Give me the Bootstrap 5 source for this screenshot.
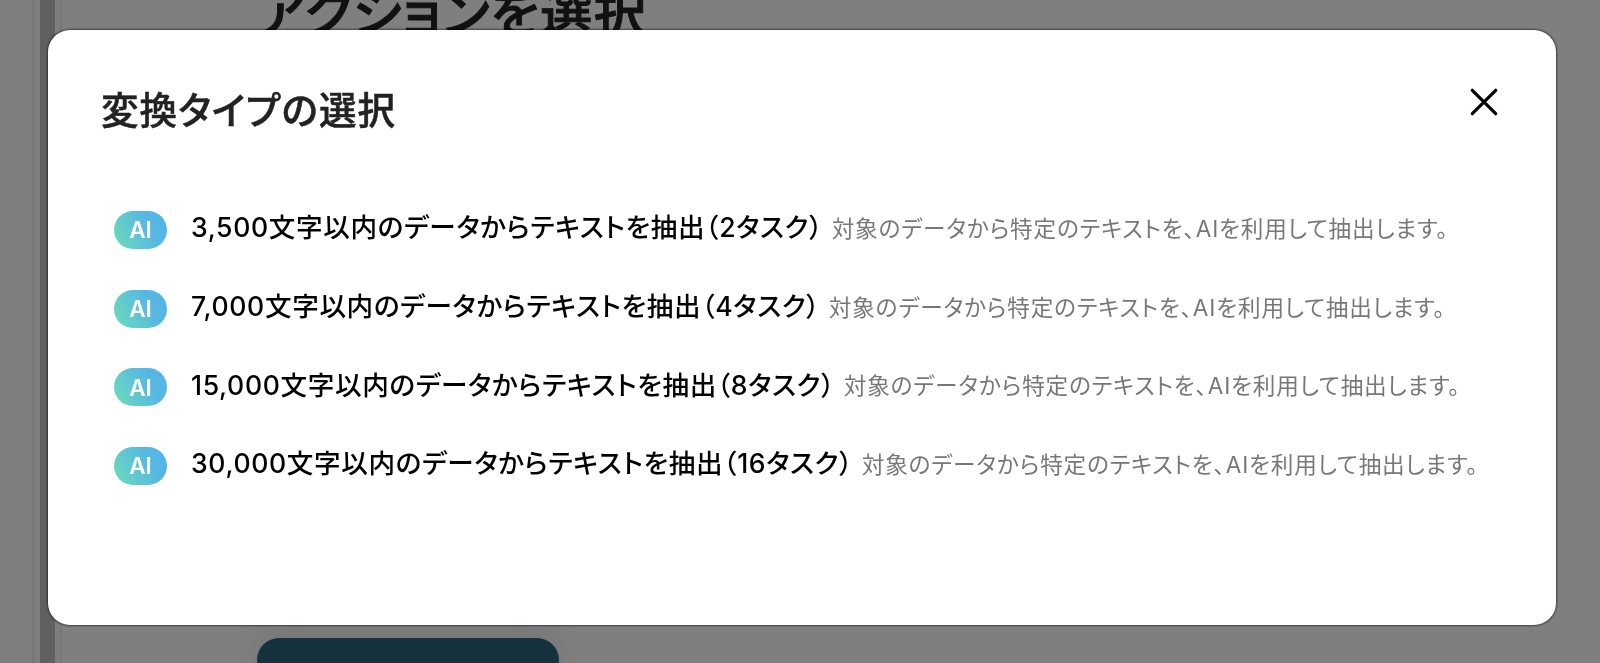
<!DOCTYPE html>
<html lang="ja">
    <head>
        <meta charset="UTF-8">
        <title>変換タイプの選択</title>
        <link href="https://cdn.jsdelivr.net/npm/bootstrap@5.3.3/dist/css/bootstrap.min.css" rel="stylesheet">
        <style>
            body {
                height: 663px;
                font-family: Inter, "Noto Sans CJK JP", sans-serif;
                font-feature-settings: "palt";
                color: #222;
            }
            .side-pane { width: 40px; background: #fdfdfd; }
            .side-line { width: 3px; margin-right: 5px; background: #f0f0f0; }
            .scroll-bar { width: 15px; background: #c1c1c1; }
            .pane-edge { width: 7px; background: #fafafa; border-right: 2px solid #f1f1f1; }
            .action-area { padding-left: 195px; }
            .action-title { font-size: 52.7px; line-height: 60px; height: 60px; margin: -17px 0 595px; letter-spacing: 1px; font-weight: 500; -webkit-text-stroke: .9px #222; white-space: nowrap; }
            .action-btn { width: 302px; height: 25px; border-radius: 22px 22px 0 0; background: #2e647e; box-shadow: 0 2px 40px rgba(0, 0, 0, .15); }

            .modal-backdrop { --bs-backdrop-opacity: .5; }
            .type-dialog { max-width: none; margin: 30px 44px 0 48px; }
            .type-content { height: 595px; border: 0; border-radius: 22px; box-shadow: 0 0 2px 1px rgba(0, 0, 0, .5); }
            .type-header { padding: 53px 58px 0 53px; height: 181px; }
            .type-title { font-size: 37.6px; line-height: 54px; letter-spacing: 1px; font-weight: 500; -webkit-text-stroke: .5px #222; color: #222; padding-top: 1px; }
            .close-btn { margin-top: 5px; line-height: 0; }
            .type-row { height: 38px; margin-bottom: 40.7px; padding-left: 66px; white-space: nowrap; }
            .ai-tag { width: 53px; height: 38px; border-radius: 19px; margin-right: 24px; background: linear-gradient(60deg, #6bdabb 5%, #57b8e2 65%, #53b2e9); font-size: 22.5px; font-weight: 600; color: #fff; }
            .type-name { font-size: 26.6px; line-height: 38px; letter-spacing: .64px; font-weight: 500; color: #000; margin-top: -2.6px; }
            .type-desc { font-size: 22.6px; line-height: 38px; letter-spacing: .86px; font-weight: 400; color: #777; margin: -1px 0 0 8.6px; }
        </style>
    </head>
    <body class="overflow-hidden">
        <div class="d-flex h-100">
            <div class="side-pane d-flex justify-content-end">
                <div class="side-line"></div>
            </div>
            <div class="scroll-bar"></div>
            <div class="pane-edge"></div>
            <main class="action-area flex-grow-1">
                <h1 class="action-title">アクションを選択</h1>
                <div class="action-btn"></div>
            </main>
        </div>

        <div class="modal-backdrop show"></div>
        <div class="modal show d-block overflow-hidden" tabindex="-1">
            <div class="modal-dialog type-dialog">
                <div class="modal-content type-content">
                    <div class="type-header d-flex justify-content-between align-items-start">
                        <h2 class="type-title mb-0">変換タイプの選択</h2>
                        <button type="button" class="close-btn btn p-0 border-0" aria-label="閉じる">
                            <svg width="28" height="28" viewBox="0 0 28 28" fill="none" stroke="#000" stroke-width="3.2" stroke-linecap="round">
                                <path d="M2.3 2.3l23.4 23.4M25.7 2.3L2.3 25.7"/>
                            </svg>
                        </button>
                    </div>
                    <div>
                        <div class="type-row d-flex">
                            <span class="ai-tag d-flex align-items-center justify-content-center">AI</span>
                            <span class="type-name">3,500文字以内のデータからテキストを抽出（2タスク）</span>
                            <span class="type-desc">対象のデータから特定のテキストを、AIを利用して抽出します。</span>
                        </div>
                        <div class="type-row d-flex">
                            <span class="ai-tag d-flex align-items-center justify-content-center">AI</span>
                            <span class="type-name">7,000文字以内のデータからテキストを抽出（4タスク）</span>
                            <span class="type-desc">対象のデータから特定のテキストを、AIを利用して抽出します。</span>
                        </div>
                        <div class="type-row d-flex">
                            <span class="ai-tag d-flex align-items-center justify-content-center">AI</span>
                            <span class="type-name">15,000文字以内のデータからテキストを抽出（8タスク）</span>
                            <span class="type-desc">対象のデータから特定のテキストを、AIを利用して抽出します。</span>
                        </div>
                        <div class="type-row d-flex">
                            <span class="ai-tag d-flex align-items-center justify-content-center">AI</span>
                            <span class="type-name">30,000文字以内のデータからテキストを抽出（16タスク）</span>
                            <span class="type-desc">対象のデータから特定のテキストを、AIを利用して抽出します。</span>
                        </div>
                    </div>
                </div>
            </div>
        </div>
        <script src="https://cdn.jsdelivr.net/npm/bootstrap@5.3.3/dist/js/bootstrap.bundle.min.js"></script>
    </body>
</html>
